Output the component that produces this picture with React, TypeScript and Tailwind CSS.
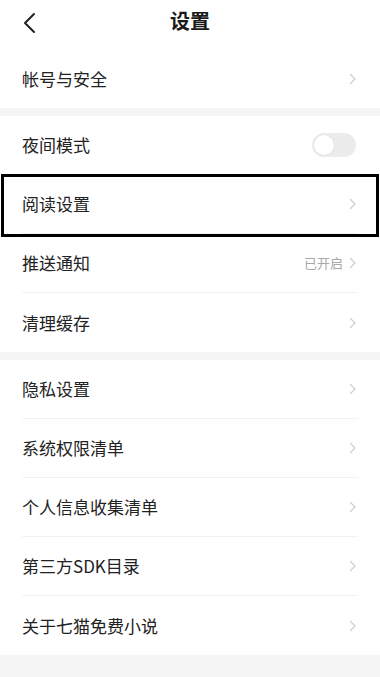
const font = { fontFamily: '"Noto Sans CJK SC", "Noto Sans", sans-serif' }

interface Row {
  label: string
  value?: string
  toggle?: boolean
  highlight?: boolean
}

const SECTIONS: Row[][] = [
  [
    { label: '夜间模式', toggle: true },
    { label: '阅读设置', highlight: true },
    { label: '推送通知', value: '已开启' },
    { label: '清理缓存' },
  ],
  [
    { label: '隐私设置' },
    { label: '系统权限清单' },
    { label: '个人信息收集清单' },
    { label: '第三方SDK目录' },
    { label: '关于七猫免费小说' },
  ],
]

function Chevron() {
  return (
    <svg width="8" height="12" viewBox="0 0 8 12" fill="none">
      <path d="M1.5 1.5L6 6l-4.5 4.5" stroke="#cfcfcf" strokeWidth="1.3" strokeLinecap="round" strokeLinejoin="round" />
    </svg>
  )
}

function SettingRow({ row, last }: { row: Row; last: boolean }) {
  return (
    <div className="relative h-[59px] px-[22px]">
      <div className={`flex h-full items-center justify-between ${last ? '' : 'border-b border-[#f2f2f2]'}`}>
        <span className="text-[17px] text-[#222]">{row.label}</span>
        {row.toggle ? (
          <div className="mr-[2px] flex h-[24px] w-[44px] items-center rounded-full bg-[#ececec] px-[2px]">
            <div className="h-[20px] w-[20px] rounded-full bg-white shadow-[0_0_2px_rgba(0,0,0,0.1)]" />
          </div>
        ) : (
          <div className="flex items-center gap-[6px] pr-[1px]">
            {row.value && <span className="text-[13px] text-[#a8a8a8]">{row.value}</span>}
            <Chevron />
          </div>
        )}
      </div>
      {row.highlight && (
        <div className="pointer-events-none absolute bottom-[-3px] left-[1px] right-[1px] top-[-1px] border-[3px] border-black" />
      )}
    </div>
  )
}

export default function App() {
  return (
    <div className="min-h-[677px] bg-[#f5f5f5]" style={font}>
      {/* Header */}
      <div className="relative flex h-[49px] items-center justify-center bg-white">
        <svg className="absolute left-[22px] top-[12px]" width="16" height="22" viewBox="0 0 16 22" fill="none">
          <path d="M12 2L3 11l9 9" stroke="#222" strokeWidth="2" strokeLinecap="round" strokeLinejoin="round" />
        </svg>
        <span className="-mt-[7px] text-[20px] font-semibold text-[#1a1a1a]">设置</span>
      </div>

      {/* Account */}
      <div className="bg-white">
        <SettingRow row={{ label: '帐号与安全' }} last />
      </div>

      {SECTIONS.map((section, i) => (
        <div key={i} className="mt-[8px] bg-white">
          {section.map((row, j) => (
            <SettingRow key={row.label} row={row} last={j === section.length - 1} />
          ))}
        </div>
      ))}
    </div>
  )
}
